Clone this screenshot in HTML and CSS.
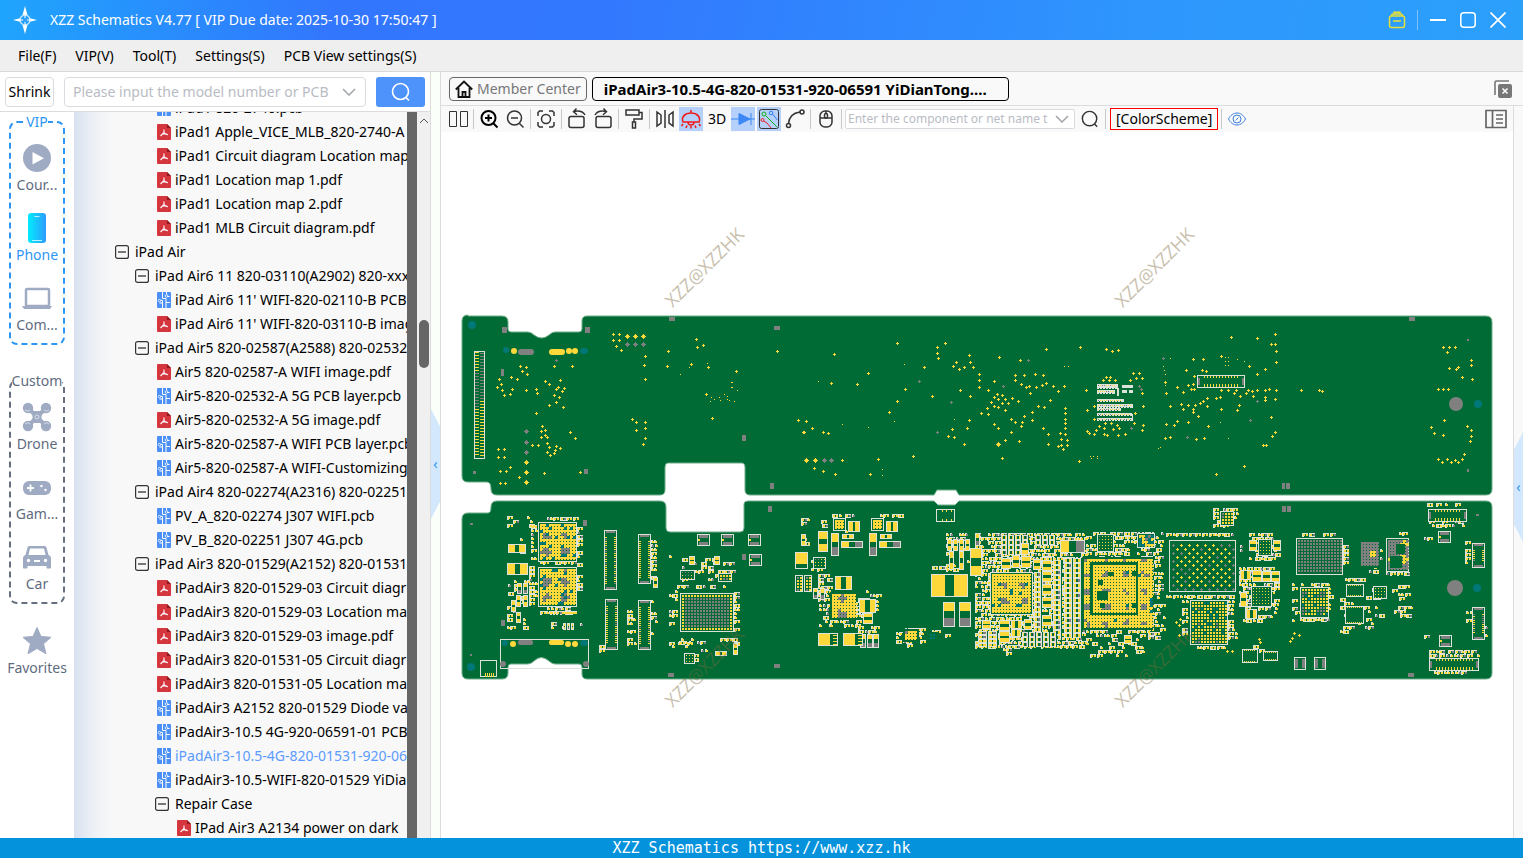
FILE: index.html
```html
<!DOCTYPE html>
<html lang="en">
<head>
    <meta charset="utf-8">
    <title>XZZ Schematics</title>
    <link rel="stylesheet" href="styles.css">
</head>
<body>
    <!-- shared icons -->
    <svg class="defs" width="0" height="0">
        <symbol id="i-pdf" viewBox="0 0 14 16">
            <path d="M1 0h9l4 4v11a1 1 0 0 1-1 1H1a1 1 0 0 1-1-1V1a1 1 0 0 1 1-1z" fill="#d5353d"/>
            <path d="M10 0l4 4h-4z" fill="#8d1a20"/>
            <path d="M7 5.500v3L3.500 12M7 8.500c1 1.500 2 2.300 4 2.300M4.500 10.600c2-.9 4-1.100 5.500-.6" fill="none" stroke="#fff" stroke-width="1.100"/>
        </symbol>
        <symbol id="i-pcb" viewBox="0 0 14 16">
            <rect width="14" height="16" rx="1" fill="#4c8ff7"/>
            <path d="M5.500 0v6.500H9M9.500 0v2.500M12.500 4.500h-2.500M9 6.500V16M3.500 8.500h2v2.500H2.500M5.500 11v5M9 10.500h4" fill="none" stroke="#fff" stroke-width="1"/>
            <circle cx="9.500" cy="4" r="1.300" fill="#4c8ff7" stroke="#fff" stroke-width=".8"/>
            <circle cx="2.500" cy="8.500" r="1.200" fill="#4c8ff7" stroke="#fff" stroke-width=".8"/>
        </symbol>
        <symbol id="i-minus" viewBox="0 0 14 14">
            <rect x=".6" y=".6" width="12.800" height="12.800" rx="2" fill="none" stroke="#333" stroke-width="1.200"/>
            <path d="M3 7h8" stroke="#222" stroke-width="1.200"/>
        </symbol>
        <symbol id="i-search" viewBox="0 0 20 20">
            <circle cx="9.500" cy="9.500" r="8" fill="none" stroke="currentColor" stroke-width="1.600"/>
            <path d="M15 15.500l3 3" stroke="currentColor" stroke-width="1.600"/>
        </symbol>
        <symbol id="i-chevron" viewBox="0 0 14 8">
            <path d="M1 1l6 6 6-6" fill="none" stroke="#a0a4aa" stroke-width="1.500"/>
        </symbol>
    </svg>

    <header class="titlebar">
        <svg class="logo" viewBox="0 0 24 28">
            <path d="M12 0l2.500 9h-5zM12 28l2.500-9h-5zM0 14l8-2v4zM24 14l-8-2v4z" fill="#fff"/>
            <circle cx="12" cy="14" r="5" fill="none" stroke="#bfe3ff" stroke-width="1.500"/>
            <path d="M12 8v12M6 14h12" stroke="#fff" stroke-width="1"/>
            <circle cx="12" cy="14" r="2" fill="#2e9bff"/>
        </svg>
        <h1>XZZ Schematics V4.77 [ VIP Due date: 2025-10-30 17:50:47 ]</h1>
        <div class="window-buttons">
            <button aria-label="Toolbox">
                <svg width="18" height="18" viewBox="0 0 18 18" fill="none" stroke="#e5e038" stroke-width="1.500"><rect x="1.500" y="5" width="15" height="11.500" rx="2"/><path d="M3.500 5c0-1.500 1-2 2-2h7c1 0 2 .5 2 2M6 3V1.200h6V3M5 10h8"/></svg>
            </button>
            <span class="divider"></span>
            <button aria-label="Minimize"><svg width="16" height="16" viewBox="0 0 16 16"><path d="M0 8h16" stroke="#fff" stroke-width="2"/></svg></button>
            <button aria-label="Maximize"><svg width="16" height="16" viewBox="0 0 16 16"><rect x=".8" y=".8" width="14.400" height="14.400" rx="3" fill="none" stroke="#fff" stroke-width="1.500"/></svg></button>
            <button aria-label="Close"><svg width="16" height="16" viewBox="0 0 16 16"><path d="M.5.5l15 15M15.500.5l-15 15" stroke="#fff" stroke-width="1.700"/></svg></button>
        </div>
    </header>

    <nav class="menubar">
        <button>File(F)</button>
        <button>VIP(V)</button>
        <button>Tool(T)</button>
        <button>Settings(S)</button>
        <button>PCB View settings(S)</button>
    </nav>

    <main class="workspace">
        <section class="library">
            <form class="search-row">
                <button type="button" class="shrink">Shrink</button>
                <div class="combo">
                    <input type="text" aria-label="Model number" placeholder="Please input the model number or PCB">
                    <svg width="14" height="8"><use href="#i-chevron"/></svg>
                </div>
                <button type="button" class="search-btn" aria-label="Search"><svg width="20" height="20"><use href="#i-search"/></svg></button>
            </form>

            <div class="library-body">
                <div class="categories">
                    <fieldset class="group vip">
                        <legend>VIP</legend>
                        <button class="category">
                            <svg viewBox="0 0 30 30"><circle cx="15" cy="15" r="14" fill="#9fabc2"/><path d="M10.500 9v12.500l11.500-6.200z" fill="#fff"/></svg>
                            <span>Cour...</span>
                        </button>
                        <button class="category current">
                            <svg viewBox="0 0 30 30"><defs><linearGradient id="phone"><stop offset="0" stop-color="#03ecfd"/><stop offset="1" stop-color="#2c9cfd"/></linearGradient></defs><rect x="6" y="0" width="18" height="30" rx="3" fill="url(#phone)"/><path d="M12.500 3.500h5M10 27.500h10" stroke="#bdf3ff" stroke-width="1.200"/></svg>
                            <span>Phone</span>
                        </button>
                        <button class="category">
                            <svg viewBox="0 0 30 30"><rect x="4" y="6" width="23" height="17" rx="1" fill="none" stroke="#9fabc2" stroke-width="2.500"/><path d="M0 23h30l-2 3H2z" fill="#9fabc2"/></svg>
                            <span>Com...</span>
                        </button>
                    </fieldset>
                    <fieldset class="group custom">
                        <legend>Custom</legend>
                        <button class="category">
                            <svg viewBox="0 0 30 30"><path d="M6 6l18 18M24 6L6 24" stroke="#9fabc2" stroke-width="4"/><g fill="#9fabc2"><circle cx="6" cy="6" r="5.200"/><circle cx="24" cy="6" r="5.200"/><circle cx="6" cy="24" r="5.200"/><circle cx="24" cy="24" r="5.200"/><rect x="10.500" y="9" width="9" height="12" rx="3"/></g><g fill="none" stroke="#e4e8f0" stroke-width=".8"><path d="M3 8a3.500 3.500 0 0 0 5 0M27 8a3.500 3.500 0 0 1-5 0M3 22a3.500 3.500 0 0 1 5 0M27 22a3.500 3.500 0 0 0-5 0"/><circle cx="15" cy="15" r="2"/></g></svg>
                            <span>Drone</span>
                        </button>
                        <button class="category">
                            <svg viewBox="0 0 30 30"><rect x="1" y="9" width="28" height="14" rx="6" fill="#9fabc2"/><path d="M5 16h7M8.500 12.500v7" stroke="#fff" stroke-width="1.800"/><circle cx="19.500" cy="14" r="1.200" fill="#fff"/><circle cx="23.500" cy="18" r="1.200" fill="#fff"/></svg>
                            <span>Gam...</span>
                        </button>
                        <button class="category">
                            <svg viewBox="0 0 30 30"><path d="M7.500 4h15c1 0 1.800.6 2 1.500L26.500 13c1.500.6 2.500 1.800 2.500 3.500v9c0 .6-.4 1-1 1h-2.500c-.6 0-1-.4-1-1V24H5.500v1.500c0 .6-.4 1-1 1H2c-.6 0-1-.4-1-1v-9c0-1.700 1-2.900 2.500-3.500l2-7.500c.2-.9 1-1.500 2-1.500zM8 6.500L6.500 13h17L22 6.500z" fill="#9fabc2" fill-rule="evenodd"/><circle cx="6.500" cy="18.500" r="1.700" fill="#fff"/><circle cx="23.500" cy="18.500" r="1.700" fill="#fff"/><path d="M12 19h6" stroke="#fff" stroke-width="2"/></svg>
                            <span>Car</span>
                        </button>
                    </fieldset>
                    <button class="category">
                        <svg viewBox="0 0 30 30"><path d="M15 1.500l4 9 10 .8-7.500 6.500 2.500 10-9-5.300-9 5.300 2.500-10L1 11.300l10-.8z" fill="#9fabc2" stroke="#9fabc2" stroke-linejoin="round"/></svg>
                        <span>Favorites</span>
                    </button>
                </div>

                <div class="tree">
                    <ul class="level-1">
                        <li>
                            <ul class="level-2"><li>
                            <ul class="files">
                                <li><svg class="file"><use href="#i-pcb"/></svg>iPad1 820-2740.pcb</li>
                                <li><svg class="file"><use href="#i-pdf"/></svg>iPad1 Apple_VICE_MLB_820-2740-A</li>
                                <li><svg class="file"><use href="#i-pdf"/></svg>iPad1 Circuit diagram Location map</li>
                                <li><svg class="file"><use href="#i-pdf"/></svg>iPad1 Location map 1.pdf</li>
                                <li><svg class="file"><use href="#i-pdf"/></svg>iPad1 Location map 2.pdf</li>
                                <li><svg class="file"><use href="#i-pdf"/></svg>iPad1 MLB Circuit diagram.pdf</li>
                            </ul>
                            </li></ul>
                        </li>
                        <li>
                            <button class="node"><svg class="toggle"><use href="#i-minus"/></svg>iPad Air</button>
                            <ul class="level-2">
                                <li>
                                    <button class="node"><svg class="toggle"><use href="#i-minus"/></svg>iPad Air6 11 820-03110(A2902) 820-xxx</button>
                                    <ul class="files">
                                        <li><svg class="file"><use href="#i-pcb"/></svg>iPad Air6 11' WIFI-820-02110-B PCB</li>
                                        <li><svg class="file"><use href="#i-pdf"/></svg>iPad Air6 11' WIFI-820-03110-B imag</li>
                                    </ul>
                                </li>
                                <li>
                                    <button class="node"><svg class="toggle"><use href="#i-minus"/></svg>iPad Air5 820-02587(A2588) 820-02532</button>
                                    <ul class="files">
                                        <li><svg class="file"><use href="#i-pdf"/></svg>Air5 820-02587-A WIFI image.pdf</li>
                                        <li><svg class="file"><use href="#i-pcb"/></svg>Air5-820-02532-A 5G PCB layer.pcb</li>
                                        <li><svg class="file"><use href="#i-pdf"/></svg>Air5-820-02532-A 5G image.pdf</li>
                                        <li><svg class="file"><use href="#i-pcb"/></svg>Air5-820-02587-A WIFI PCB layer.pcb</li>
                                        <li><svg class="file"><use href="#i-pcb"/></svg>Air5-820-02587-A WIFI-Customizing</li>
                                    </ul>
                                </li>
                                <li>
                                    <button class="node"><svg class="toggle"><use href="#i-minus"/></svg>iPad Air4 820-02274(A2316) 820-02251</button>
                                    <ul class="files">
                                        <li><svg class="file"><use href="#i-pcb"/></svg>PV_A_820-02274 J307 WIFI.pcb</li>
                                        <li><svg class="file"><use href="#i-pcb"/></svg>PV_B_820-02251 J307 4G.pcb</li>
                                    </ul>
                                </li>
                                <li>
                                    <button class="node"><svg class="toggle"><use href="#i-minus"/></svg>iPad Air3 820-01529(A2152) 820-01531</button>
                                    <ul class="files">
                                        <li><svg class="file"><use href="#i-pdf"/></svg>iPadAir3 820-01529-03 Circuit diagr</li>
                                        <li><svg class="file"><use href="#i-pdf"/></svg>iPadAir3 820-01529-03 Location ma</li>
                                        <li><svg class="file"><use href="#i-pdf"/></svg>iPadAir3 820-01529-03 image.pdf</li>
                                        <li><svg class="file"><use href="#i-pdf"/></svg>iPadAir3 820-01531-05 Circuit diagr</li>
                                        <li><svg class="file"><use href="#i-pdf"/></svg>iPadAir3 820-01531-05 Location ma</li>
                                        <li><svg class="file"><use href="#i-pcb"/></svg>iPadAir3 A2152 820-01529 Diode va</li>
                                        <li><svg class="file"><use href="#i-pcb"/></svg>iPadAir3-10.5 4G-920-06591-01 PCB</li>
                                        <li class="selected"><svg class="file"><use href="#i-pcb"/></svg>iPadAir3-10.5-4G-820-01531-920-06</li>
                                        <li><svg class="file"><use href="#i-pcb"/></svg>iPadAir3-10.5-WIFI-820-01529 YiDia</li>
                                    </ul>
                                    <ul class="level-3">
                                        <li>
                                            <button class="node"><svg class="toggle"><use href="#i-minus"/></svg>Repair Case</button>
                                            <ul class="files">
                                                <li><svg class="file"><use href="#i-pdf"/></svg>IPad Air3 A2134 power on dark</li>
                                            </ul>
                                        </li>
                                    </ul>
                                </li>
                            </ul>
                        </li>
                    </ul>
                </div>
                <div class="tree-edge"></div>
                <div class="scrollbar">
                    <svg width="10" height="6" viewBox="0 0 10 6"><path d="M1 5l4-4 4 4" fill="none" stroke="#555"/></svg>
                    <div class="thumb"></div>
                </div>
            </div>
        </section>

        <div class="gutter left">
            <button class="handle" aria-label="Collapse library">&lsaquo;</button>
        </div>

        <section class="viewer">
            <div class="tabs">
                <button class="tab">
                    <svg width="18" height="18" viewBox="0 0 18 18" fill="none" stroke="#111" stroke-width="1.800"><path d="M.8 9.500L9 1.500l8.200 8M3.500 8v9h11V8M7.500 17v-5h3v5"/></svg>
                    Member Center
                </button>
                <button class="tab active">iPadAir3-10.5-4G-820-01531-920-06591 YiDianTong....</button>
                <button class="close-all" aria-label="Close all tabs">
                    <svg width="18" height="18" viewBox="0 0 18 18"><path d="M1 15V2.500C1 1.500 1.500 1 2.500 1H15" fill="none" stroke="#777" stroke-width="1.600"/><rect x="4" y="4" width="14" height="14" rx="2" fill="#777"/><path d="M8.500 8.500l5 5M13.500 8.500l-5 5" stroke="#fff" stroke-width="1.500"/></svg>
                </button>
            </div>

            <div class="viewer-body">
                <div class="board-pane">
                    <div class="toolbar">
                        <button class="tool" aria-label="Split view"><svg viewBox="0 0 24 24" class="thin"><path d="M3.500 4.500h7v15h-7zM14.500 4.500h7v15h-7z"/></svg></button>
                        <span class="sep"></span>
                        <button class="tool" aria-label="Zoom in"><svg viewBox="0 0 24 24" class="bold"><circle cx="11.500" cy="11" r="7"/><path d="M16.500 16.500l4 4M8 11h7M11.500 7.500v7"/></svg></button>
                        <button class="tool" aria-label="Zoom out"><svg viewBox="0 0 24 24"><circle cx="11.500" cy="11" r="7"/><path d="M16.500 16.500l4 4M8 11h7"/></svg></button>
                        <span class="sep"></span>
                        <button class="tool" aria-label="Fit"><svg viewBox="0 0 24 24"><circle cx="12" cy="12" r="4.500"/><path d="M4 9V5.500L5.500 4H9M15 4h3.500L20 5.500V9M20 15v3.500L18.500 20H15M9 20H5.500L4 18.500V15"/></svg></button>
                        <span class="sep"></span>
                        <button class="tool" aria-label="Rotate left"><svg viewBox="0 0 24 24"><rect x="4" y="9.500" width="15" height="11" rx="2"/><path d="M9 4.500c5-1 9 0 11 3.500M11.500 1.500L8.500 4.700l3.500 3"/></svg></button>
                        <button class="tool" aria-label="Rotate right"><svg viewBox="0 0 24 24"><rect x="5" y="9.500" width="15" height="11" rx="2"/><path d="M15 4.500c-5-1-9 0-11 3.500M12.500 1.500l3 3.200-3.500 3"/></svg></button>
                        <span class="sep"></span>
                        <button class="tool" aria-label="Paint"><svg viewBox="0 0 24 24"><rect x="4" y="3" width="13" height="5"/><path d="M17 5.500h3V12h-8v3M10.500 15h3v6h-3z"/></svg></button>
                        <span class="sep"></span>
                        <button class="tool" aria-label="Mirror"><svg viewBox="0 0 24 24"><path d="M4 5l4 3v8l-4 3zM20 5l-4 3v8l4 3zM12 3v18"/></svg></button>
                        <button class="tool on" aria-label="Light"><svg viewBox="0 0 24 24" class="red"><path d="M4 15c-2-5 2-9 8-9s10 4 8 9zM12 6V3M9 15a3 3 0 0 0 6 0M4 17l-1.500 2M20 17l1.500 2M12 19v2.500M8 18.500L7 21M16 18.500l1 2.500"/></svg></button>
                        <button class="tool text">3D</button>
                        <button class="tool on" aria-label="Diode"><svg viewBox="0 0 24 24" class="blue"><path d="M0 12h24M20 6v12"/><path d="M8 6.500v11l11-5.500z" fill="#3a87f5"/></svg></button>
                        <button class="tool on" aria-label="Nets"><svg viewBox="0 0 24 24" class="thin"><rect x="2.500" y="2.500" width="19" height="19" rx="2"/><path d="M8.500 8.500L20 20" stroke="#13b313"/><circle cx="7" cy="7" r="2" stroke="#13b313"/><circle cx="5.500" cy="13" r="1.500" stroke="#e22"/><path d="M6.500 14l3.500 2 4 5" stroke="#e22"/><circle cx="14" cy="6" r="1.800" stroke="#2f7fee"/><path d="M15.500 7l5 6" stroke="#2f7fee"/></svg></button>
                        <button class="tool" aria-label="Curve"><svg viewBox="0 0 24 24"><circle cx="5.500" cy="18.500" r="2"/><circle cx="19" cy="5" r="2"/><path d="M5.500 16.500C6 10 10 6 17 5"/></svg></button>
                        <span class="sep"></span>
                        <button class="tool" aria-label="Mouse"><svg viewBox="0 0 24 24"><rect x="6" y="4" width="12" height="16" rx="5"/><path d="M6 11h12M12 4v3"/><rect x="10.500" y="6.500" width="3" height="4.500" rx="1.500"/></svg></button>
                        <span class="sep"></span>
                        <div class="combo small">
                            <input type="text" aria-label="Component or net name" placeholder="Enter the component or net name t">
                            <svg width="14" height="8"><use href="#i-chevron"/></svg>
                        </div>
                        <button class="tool" aria-label="Find"><svg class="find"><use href="#i-search"/></svg></button>
                        <span class="sep"></span>
                        <button class="scheme">[ColorScheme]</button>
                        <span class="sep"></span>
                        <button class="tool" aria-label="Show"><svg viewBox="0 0 24 24" class="eye"><path d="M3.500 12c4-8 13-8 17 0-4 8-13 8-17 0z"/><circle cx="12" cy="12" r="4"/><path d="M10.500 13.500l3-3"/></svg></button>
                        <button class="panel-toggle" aria-label="Side panel"><svg width="22" height="20" viewBox="0 0 22 20" fill="none" stroke="#666" stroke-width="1.700"><path d="M1 1.500h20v17H1zM7.500 1.500v17M11 6h7M11 10h7M11 14h7"/></svg></button>
                    </div>
                    <svg id="board" viewBox="441 132 1072 706"></svg>
                </div>
                <div class="gutter right">
                    <button class="handle" aria-label="Expand panel">&lsaquo;</button>
                </div>
            </div>
        </section>
    </main>

    <footer>XZZ Schematics https://www.xzz.hk</footer>
    <script src="board.js"></script>
</body>
</html>
```
FILE: styles.css
```css
* {
    box-sizing: border-box;
}

body {
    margin: 0;
    height: 100vh;
    display: flex;
    flex-direction: column;
    overflow: hidden;
    font-family: "Noto Sans", "Open Sans", sans-serif;
    font-size: 14px;
    line-height: 20px;
    color: #000;
    background: #fff;
}

button, input {
    font: inherit;
    color: inherit;
}

button {
    padding: 0;
    border: 0;
    background: none;
    white-space: nowrap;
}

svg {
    display: block;
    flex: none;
}

.defs {
    position: absolute;
}

/* title bar */
.titlebar {
    height: 40px;
    flex: none;
    display: flex;
    align-items: center;
    padding: 0 17px 0 13px;
    color: #fff;
    background: linear-gradient(100deg, #1fa5fd 0%, #3276fd 22%, #3278fe 40%, #2e96fd 75%, #2ba0fb 100%);
}

.logo {
    width: 24px;
    height: 28px;
    margin-right: 13px;
}

.titlebar h1 {
    margin: 0;
    font-size: 14px;
    font-weight: normal;
}

.window-buttons {
    display: flex;
    align-items: center;
    gap: 14px;
    margin-left: auto;
}

.divider {
    width: 1px;
    height: 20px;
    margin: 0 -2px 0 -3px;
    background: #7dc0fd;
}

.menubar {
    height: 32px;
    flex: none;
    display: flex;
    align-items: center;
    gap: 19px;
    padding: 0 18px;
    background: #efefef;
    border-bottom: 1px solid #d9d9d9;
}

.workspace {
    flex: 1;
    min-height: 0;
    display: flex;
}

/* left side */
.library {
    width: 431px;
    flex: none;
    display: flex;
    flex-direction: column;
    border-right: 1px solid #dcdcdc;
}

.search-row {
    height: 40px;
    flex: none;
    display: flex;
    align-items: center;
    gap: 10px;
    padding: 0 5px;
    border-bottom: 1px solid #dcdcdc;
}

.shrink, .combo {
    height: 30px;
    border: 1px solid #d9dbe0;
    border-radius: 4px;
    background: #fff;
}

.shrink {
    width: 49px;
}

.combo {
    flex: 1;
    min-width: 0;
    display: flex;
    align-items: center;
    padding: 0 9px 0 8px;
}

.combo input {
    flex: 1;
    min-width: 0;
    padding: 0;
    border: 0;
    outline: 0;
    background: none;
}

.combo svg {
    margin-left: 6px;
}

.combo input::placeholder {
    color: #b9bcc4;
}

.search-btn {
    width: 49px;
    height: 30px;
    display: flex;
    align-items: center;
    justify-content: center;
    border-radius: 3px;
    color: #fff;
    background: #4e92fb;
}

.library-body {
    flex: 1;
    min-height: 0;
    display: flex;
}

.categories {
    width: 74px;
    flex: none;
    padding: 0 9px;
    color: #5f6b80;
}

.group {
    min-width: 0;
    margin: 0 0 26px;
    padding: 11px 0 8px;
    display: flex;
    flex-direction: column;
    gap: 18px;
    border: 2px dashed #666f80;
    border-radius: 8px;
}

.group.custom {
    margin-bottom: 22px;
}

.group legend {
    height: 20px;
    margin: 0 auto;
    padding: 0;
}

.vip {
    border-color: #2d96f3;
}

.vip legend, .category.current {
    color: #2d96f3;
}

.category {
    width: 100%;
    display: flex;
    flex-direction: column;
    align-items: center;
    gap: 2px;
}

.category svg {
    width: 30px;
    height: 30px;
}

/* file tree */
.tree {
    flex: 1;
    min-width: 0;
    overflow: hidden;
    background: linear-gradient(90deg, #d8e1f1 0, #eceff5 18px, #f8f8f8 38px);
}

.tree ul {
    margin: 0;
    padding: 0;
    list-style: none;
}

.tree .level-1 {
    margin-top: -16px;
    padding-left: 41px;
}

.tree .level-2, .tree .level-3 {
    padding-left: 20px;
}

.node, .files li {
    height: 24px;
    display: flex;
    align-items: center;
    white-space: nowrap;
}

.tree .files {
    padding-left: 22px;
}

.toggle {
    width: 14px;
    height: 14px;
    margin-right: 6px;
}

.file {
    width: 14px;
    height: 16px;
    margin-right: 4px;
}

.selected {
    color: #5c9bff;
}

.tree-edge {
    width: 10px;
    background: #666;
}

.scrollbar {
    width: 13px;
    padding: 6px 2px;
    background: #f0f0f0;
}

.thumb {
    width: 10px;
    height: 48px;
    margin-top: 196px;
    border-radius: 5px;
    background: #666;
}

/* collapsible gutters */
.gutter {
    width: 10px;
    flex: none;
    display: flex;
    align-items: center;
}

.gutter.left {
    padding-top: 18px;
    background: #fafffa;
    border-right: 1px solid #dcdcdc;
}

.gutter.right {
    padding-top: 30px;
    background: #f9f9f9;
    border-left: 1px solid #dcdcdc;
}

.handle {
    width: 9px;
    height: 110px;
    color: #2d96f3;
    background: #d3e8fd;
    clip-path: polygon(0 0, 100% 16%, 100% 84%, 0 100%);
}

.right .handle {
    clip-path: polygon(0 16%, 100% 0, 100% 100%, 0 84%);
}

/* right side */
.viewer {
    flex: 1;
    min-width: 0;
    display: flex;
    flex-direction: column;
}

.tabs {
    height: 34px;
    flex: none;
    display: flex;
    align-items: center;
    gap: 5px;
    padding: 0 11px 0 8px;
    background: #f9f9f9;
    border-bottom: 1px solid #dcdcdc;
}

.tab {
    height: 24px;
    display: flex;
    align-items: center;
    gap: 4px;
    padding: 0 5px;
    border: 1px solid #666;
    border-radius: 4px;
    color: #777;
}

.tab.active {
    min-width: 417px;
    padding: 0 11px;
    border-color: #000;
    color: #000;
    font-size: 15px;
    font-weight: bold;
}

.close-all {
    margin-left: auto;
}

.viewer-body {
    flex: 1;
    min-height: 0;
    display: flex;
}

.board-pane {
    flex: 1;
    min-width: 0;
    display: flex;
    flex-direction: column;
}

.toolbar {
    height: 26px;
    flex: none;
    display: flex;
    align-items: center;
    gap: 2px;
    padding: 0 6px 0 5px;
    background: #f9f9f9;
}

.tool {
    width: 24px;
    height: 24px;
    flex: none;
    display: flex;
    align-items: center;
    justify-content: center;
}

.tool svg {
    width: 24px;
    height: 24px;
    fill: none;
    stroke: #333;
    stroke-width: 1.5;
}

.tool svg.thin {
    stroke-width: 1;
}

.tool svg.bold {
    stroke: #000;
    stroke-width: 2;
}

.tool svg.red {
    stroke: #f01818;
}

.tool svg.blue {
    stroke: #3a87f5;
    stroke-width: 1;
}

.tool svg.eye {
    stroke: #3c7fe0;
    stroke-width: 1;
}

.tool svg.find {
    width: 18px;
    height: 18px;
    color: #333;
}

.tool.on {
    background: #b5d0fa;
}

.sep {
    width: 1px;
    height: 20px;
    margin: 0 1px;
    background: #c8c8c8;
}

.combo.small {
    flex: 0 1 230px;
    height: 20px;
    margin-right: 1px;
    padding: 0 5px 0 2px;
    border-radius: 2px;
    font-size: 12px;
}

.combo.small svg {
    margin-left: 2px;
}

.scheme {
    height: 22px;
    margin-left: 1px;
    padding: 0 5px;
    border: 1px solid #f00;
}

.panel-toggle {
    margin-left: auto;
}

#board {
    width: 100%;
    flex: 1;
    min-height: 0;
}

.watermark {
    font: 18px "Open Sans", sans-serif;
    text-anchor: middle;
    fill: #7d6c3c;
    opacity: .42;
}

footer {
    height: 20px;
    flex: none;
    color: #fff;
    background: #0492dc;
    font: 15px/20px "DejaVu Sans Mono", monospace;
    text-align: center;
}
```
FILE: board.js
```js
const GREEN = "#006b35";
const YELLOW = "#ffd83b";
const GREY = "#808080";
const TEAL = "#007878";
const WHITE = "#dde2da";

let svg = "";
let layer = {};

// small repeatable random generator so the board always looks the same
let seed = 7;
function rnd() {
    seed = (seed * 16807) % 2147483647;
    return seed / 2147483647;
}

function box(color, x, y, w, h) {
    layer[color] = (layer[color] || "") + `M${x} ${y}h${w}v${h}h${-w}z`;
}

function flush() {
    for (const color in layer) {
        svg += `<path fill="${color}" d="${layer[color]}" shape-rendering="crispEdges"/>`;
    }
    layer = {};
}

function frame(x, y, w, h) {
    box(WHITE, x, y, w, 1);
    box(WHITE, x, y + h - 1, w, 1);
    box(WHITE, x, y + 1, 1, h - 2);
    box(WHITE, x + w - 1, y + 1, 1, h - 2);
}

function clear(x, y, w, h) {
    box(GREEN, x, y, w, h);
    flush();
}

function plus(color, x, y, r) {
    box(color, x - r, y, r * 2 + 1, 1);
    box(color, x, y - r, 1, r * 2 + 1);
    if (r > 1) box(color, x - 1, y - 1, 3, 3);
}

function points(color, r, text) {
    text.split(" ").forEach(p => {
        const [x, y] = p.split(",").map(Number);
        plus(color, x, y, r);
    });
}

// one capacitor or resistor: two pads in a white frame
function part(x, y, w, h, second) {
    frame(x, y, w, h);
    const across = w > h;
    const n = Math.max(1, Math.round(((across ? w : h) - 2) * .36));
    if (across) {
        box(YELLOW, x + 1, y + 1, n, h - 2);
        box(second || YELLOW, x + w - 1 - n, y + 1, n, h - 2);
    } else {
        box(YELLOW, x + 1, y + 1, w - 2, n);
        box(second || YELLOW, x + 1, y + h - 1 - n, w - 2, n);
    }
}

function pads(x, y, w, h, second) {
    clear(x, y, w, h);
    part(x, y, w, h, second);
    flush();
}

// ordered block of equal parts
function bank(x, y, cols, rows, w, h) {
    clear(x, y, cols * (w + 1), rows * h);
    for (let r = 0; r < rows; r++) {
        for (let c = 0; c < cols; c++) {
            part(x + c * (w + 1), y + r * h, w, h, rnd() < .3 ? GREY : YELLOW);
        }
    }
    flush();
}

// area of small parts, fill is the share of used cells
function parts(x, y, w, h, fill) {
    for (let j = y; j + 4 <= y + h; j += 4) {
        let i = x;
        while (i + 3 <= x + w) {
            const len = rnd() > .4 ? 6 : 3;
            if (rnd() < fill && i + len <= x + w) {
                const alt = rnd() > .8 ? GREY : YELLOW;
                if (len === 6) {
                    box(WHITE, i, j, 6, 1);
                    box(WHITE, i, j + 3, rnd() > .7 ? 6 : 2, 1);
                    box(WHITE, i, j, 1, 4);
                    box(YELLOW, i + 1, j + 1, 2, 2);
                    box(alt, i + 4, j + 1, 2, 2);
                } else {
                    box(WHITE, i, j, 2, 1);
                    box(WHITE, i, j, 1, 3);
                    box(alt, i + 1, j + 1, 2, 2);
                }
            }
            i += len + (rnd() > .6 ? 1 : 0);
        }
    }
}

// ball grid chip
function bga(x, y, w, h, opt) {
    const o = Object.assign({ main: YELLOW, alt: GREY, mix: .1, step: 3, size: 2 }, opt);
    clear(x, y, w, h);
    if (!o.bare) frame(x, y, w, h);
    for (let j = y + 2; j + o.size < y + h; j += o.step) {
        for (let i = x + 2; i + o.size < x + w; i += o.step) {
            const blob = Math.sin(i * .33 + x) + Math.sin(j * .39 + y) + rnd() * .9;
            let color = blob > 2.2 - o.mix * 5 ? o.alt : o.main;
            if (o.teal && rnd() < o.teal) color = TEAL;
            if (o.border && (i < x + 5 || j < y + 5 || i > x + w - 7 || j > y + h - 7)) color = o.border;
            if (o.solid) {
                box(color, i, j, 2, 3);
                box(color, i, j, 3, 2);
            } else {
                box(color, i, j, o.size, o.size);
            }
        }
    }
    flush();
}

function connector(x, y, w, h) {
    clear(x, y, w, h);
    frame(x, y, w, h);
    if (h > w) {
        for (let j = y + 7; j < y + h - 6; j += 2) {
            box(rnd() > .15 ? YELLOW : GREY, x + 1, j, 2, 1);
            box(rnd() > .15 ? YELLOW : GREY, x + w - 3, j, 2, 1);
        }
        box(GREY, x + 2, y + 1, w - 4, 2);
        box(GREY, x + 2, y + h - 3, w - 4, 2);
    } else {
        for (let i = x + 7; i < x + w - 6; i += 3) {
            box(YELLOW, i, y + 1, 1, 2);
            box(YELLOW, i, y + h - 4, 1, 3);
        }
        box(GREY, x + 1, y + 3, 2, h - 6);
        box(GREY, x + w - 3, y + 3, 2, h - 6);
    }
    flush();
}

function greyCap(x, y) {
    frame(x, y, 13, 12);
    box(GREY, x + 2, y + 1, 9, 3);
    box(GREY, x + 2, y + 8, 9, 3);
    box(YELLOW, x + 1, y + 5, 2, 2);
}

function circle(color, x, y, rx, ry) {
    svg += `<ellipse cx="${x}" cy="${y}" rx="${rx}" ry="${ry || rx}" fill="${color}"/>`;
}

/* board outlines */
const edge = `fill="${GREEN}" stroke="#6fae8b" stroke-width="1"`;
svg += `<path ${edge} d="M468 316h34q6 0 6 6v7q0 3 3 3h17q3 0 6 3q8 6 15 0q3 -3 6 -3h24q3 0 3 -3v-8q0 -5 5 -5h899q6 0 6 6v167q0 6 -6 6h-527l-3 -5h-19l-3 5h-184q-5 0 -5 -5v-23q0 -4 -3 -4h-74q-3 0 -3 4v23q0 5 -5 5h-163q-6 0 -6 -6q0 -7 -4 -7h-19q-6 0 -6 -6v-155q0 -6 6 -6z"/>`;
svg += `<path ${edge} d="M497 501h163q6 0 6 6v21q0 4 4 4h70q4 0 4 -4v-24q0 -3 4 -3h186l4 4h17l4 -4h527q6 0 6 6v166q0 6 -6 6h-899q-5 0 -5 -5v-7q0 -3 -3 -3h-24q-3 0 -6 -3q-8 -7 -15 0q-3 3 -6 3h-17q-3 0 -3 3v6q0 6 -6 6h-34q-6 0 -6 -6v-154q0 -6 6 -6h20q3 0 3 -6t6 -6z"/>`;

/* upper board: vias */
points(YELLOW, 1, "613,334 619,334 613,340 619,340 616,346 621,350 645,356 644,365 645,379 668,351 667,366 696,339 703,345 697,347 691,364 708,367 736,371 706,394 712,418 777,351 798,420 803,432 554,366 572,366 520,366 526,367 522,371 527,374 511,377 517,379 499,379 501,384 497,387 502,390 512,389 504,395 510,394 526,390 536,389 537,393 545,381 549,384 560,380 558,387 556,389 564,388 562,391 554,395 559,397 556,402 549,405 563,407 536,413 542,426 541,431 545,430 545,435 541,437 547,437 570,432 575,438 532,445 538,445 547,443 549,447 556,446 560,448 555,450 547,452 554,453 550,455 498,449 504,449 498,457 504,457 510,467 500,471 506,471 519,477 500,483 505,483 544,473 580,472 632,419 636,422 636,430 645,422 645,428 645,438 643,444");
points(YELLOW, 1, "897,343 945,343 937,347 937,353 938,358 834,354 969,355 956,362 970,362 924,367 953,366 959,369 964,367 973,367 868,373 831,383 857,384 905,389 897,401 889,412 932,396 960,390 979,374 979,380 979,387 970,396 999,357 1020,360 1046,349 1080,347 994,381 1015,375 1024,375 1035,374 1043,375 1015,380 1021,384 1026,387 1029,386 1046,383 1042,385 1036,387 1053,386 1064,386 1058,391 1030,393 1050,400 988,390 997,394 1002,395 994,397 998,399 1005,399 1012,398 991,402 1002,403 1008,403 1018,401 994,406 987,408 998,407 1005,410 981,413 988,414 1038,406 1044,407 1032,412 1024,416 1011,419 969,420 1015,422 1022,422 994,424 1032,420 1021,426 998,428 967,428 952,429 948,436 954,437 964,444 1011,432 1043,428 1048,434 1005,440 1019,441 1002,458 1048,444 1065,408 1065,413 1065,419 1065,423 1065,428 1065,434 1060,433 1061,439 1067,440 1058,446 1061,445 1067,445 1063,449 806,421 812,428 804,432 823,432 828,433 842,460 814,468 823,471 835,474 870,474 878,459 913,456 1079,461");
points(YELLOW, 1, "1106,349 1112,351 1118,350 1133,373 1139,373 1136,378 1142,378 1130,380 1106,377 1110,377 1103,380 1109,380 1115,380 1086,390 1142,393 1094,406 1087,410 1094,419 1087,431 1099,426 1105,423 1111,423 1117,425 1104,428 1113,429 1119,428 1096,430 1089,433 1094,434 1104,434 1107,435 1118,435 1125,434 1143,425 1142,430 1134,423 1143,406 1135,413 1231,337 1257,338 1275,334 1271,344 1275,344 1276,351 1276,362 1193,359 1203,359 1221,356 1249,366 1265,369 1257,374 1186,370 1202,370 1206,371 1194,376 1165,382 1166,393 1177,387 1193,384 1188,385 1191,389 1194,389 1183,392 1221,390 1228,390 1236,390 1248,390 1252,391 1257,390 1269,389 1265,390 1276,390 1234,393 1246,393 1240,396 1253,396 1265,397 1265,400 1275,399 1220,397 1216,398 1207,398 1203,401 1200,403 1181,404 1188,405 1195,405 1170,406 1183,409 1193,409 1207,406 1193,412 1198,416 1221,409 1239,405 1237,410 1177,421 1166,424 1174,425 1188,422 1208,426 1271,417 1275,432 1272,436 1165,438 1170,437 1196,439 1204,438 1263,445 1266,445 1244,466 1216,474 1301,390 1319,390 1322,391");
points(YELLOW, 1, "1443,347 1449,347 1455,347 1447,352 1471,360 1471,365 1449,368 1456,369 1458,367 1462,377 1472,379 1438,389 1443,389 1448,389 1444,420 1431,427 1434,433 1443,435 1467,426 1471,430 1471,436 1470,441 1464,454 1438,459 1442,462 1447,459 1451,462 1455,460 1458,462 1462,459");
points(GREY, 1, "556,360 1028,360 919,381 1003,386 951,402 937,432 1163,358 1139,386 1141,389 1131,428 1257,401 1250,420 1187,437");
points(YELLOW, 2, "627,336 635,336 643,336 526,462 526,472 526,482 806,460 815,460 998,444");
points(GREY, 2, "627,344 635,344 643,344 526,431 526,442 526,452 824,460 831,460");

// single pixel test points
"680,374 689,367 707,363 731,382 731,387 732,382 732,387 737,390 711,397 710,401 714,399 719,397 720,400 724,394 727,396 727,399 729,400 734,401 818,381 904,364 842,424 868,427 894,421 882,469 882,475 954,419 1064,366 1068,366 1225,357 1225,361 1225,365 1228,357 1228,361 1228,365 1163,366 1164,370 1165,374 1165,385 1170,358 1237,359 1244,361 1220,422 1228,438 1160,447 1158,448 1090,456 1093,456 1097,456 1091,458 1097,458".split(" ").forEach(p => {
    const [x, y] = p.split(",").map(Number);
    box(YELLOW, x, y, 1, 1);
});

// grey mounting marks on both boards
[[502,327,5,6],[585,327,5,6],[669,317,6,4],[774,326,6,4],[501,369,3,7],[742,435,4,6],[770,483,4,6],[584,469,4,5],[473,471,3,3],[1409,317,6,4],[1282,483,3,6],[1286,483,4,6],[1467,339,2,2],[1467,469,2,3],[768,506,4,6],[583,520,4,6],[742,554,4,6],[501,620,4,6],[470,523,3,2],[470,654,2,2],[668,673,6,4],[774,664,6,4],[1282,506,4,6],[1287,506,4,6],[1476,514,3,2],[1408,673,6,4]].forEach(m => box(GREY, ...m));
flush();

circle(TEAL, 472, 325, 4);
circle(TEAL, 506, 350, 3);
circle(YELLOW, 514, 351, 3);
svg += `<rect x="518" y="349" width="16" height="6" rx="3" fill="${GREY}"/><rect x="549" y="349" width="16" height="6" rx="3" fill="${YELLOW}"/>`;
circle(YELLOW, 569, 351, 3);
circle(YELLOW, 575, 351, 3);
circle(TEAL, 584, 351, 4, 3);
circle(GREY, 1456, 404, 7);
circle(TEAL, 1478, 404, 4);

// edge connector on the left
frame(474, 351, 11, 108);
for (let j = 352; j < 457; j += 3) {
    const color = j > 372 && j < 408 ? GREY : YELLOW;
    box(color, 475, j, 4, 1);
    box(j < 400 ? GREY : YELLOW, 480, j + 1, 4, 1);
}
// stacked part rows in the middle
[[384,21,5],[390,18,4],[399,27,3],[404,36,4],[408,24,3],[413,35,3],[418,36,3]].forEach(([y, w, h]) => {
    box(WHITE, 1097, y, w, h);
    for (let i = 1098; i < 1095 + w; i += 2) box(rnd() > .4 ? YELLOW : GREY, i, y + 1, 1, 1);
    for (let i = 1099; i < 1095 + w; i += 3) box(GREEN, i, y + h - 1, 1, 1);
});
box(WHITE, 1117, 388, 2, 8);
box(WHITE, 1122, 385, 11, 3);
box(WHITE, 1122, 390, 5, 3);
box(WHITE, 1129, 390, 4, 3);
box(WHITE, 1132, 414, 1, 7);
flush();
connector(1197, 375, 48, 13);

/* lower board: small parts */
[[507,516,30,12,.5],[547,517,36,6,.8],[531,525,8,38,.8],[577,523,6,44,.6],[508,535,10,8,.5],[520,538,8,16,.4],[540,561,38,6,.9],[529,566,9,42,.9],[577,575,6,16,.8],[540,607,36,8,.9],[550,611,28,6,.9],[508,580,10,28,.4],[514,580,16,24,.7],[507,606,12,26,.6],[523,618,8,12,.7],[551,622,14,8,.6],[580,623,4,6,.8],[599,645,8,10,.8],[651,540,8,46,.8],[627,610,11,36,.8],[651,600,8,42,.8],[669,555,8,4,.8],[682,558,60,16,.3],[672,570,68,12,.35],[674,585,60,7,.6],[669,590,9,52,.45],[734,570,6,22,.3],[734,592,6,40,.7],[669,638,72,8,.4],[672,641,20,8,.7],[697,641,14,14,.6],[686,650,18,14,.5],
[801,518,11,28,.6],[818,520,10,10,.5],[832,514,34,6,.8],[870,514,34,6,.8],[845,530,16,5,.6],[883,530,16,5,.6],[811,560,20,14,.4],[818,574,16,30,.8],[819,600,14,30,.7],[830,620,34,10,.7],[855,598,16,22,.7],[866,590,16,10,.8],[876,600,8,12,.8],[858,626,24,14,.6],[896,628,30,20,.7],[925,630,30,10,.5],
[975,533,112,116,.9],[946,533,24,8,.9],[946,540,24,34,.4],[932,566,22,4,.6],[1000,648,20,8,.6],[1086,532,78,28,.75],[1086,626,64,8,.85],[1086,634,60,24,.38],[1148,556,18,84,.75],[1166,595,70,5,.95],[1166,533,70,4,.9],[1182,600,8,42,.8],[1228,600,10,42,.8],[1190,646,40,4,.9],
[1213,508,28,22,.7],[1240,533,4,40,.7],[1249,533,32,30,.6],[1239,567,42,58,.7],[1302,533,36,4,.7],[1343,545,8,32,.5],[1362,566,20,8,.5],[1380,545,5,26,.7],[1392,532,16,6,.8],[1409,545,4,20,.7],[1386,572,26,4,.8],[1292,583,38,5,.8],[1292,587,9,38,.5],[1328,587,6,24,.7],[1300,618,32,6,.6],[1345,578,22,6,.8],[1340,598,34,36,.4],[1366,588,20,14,.3],[1392,585,20,16,.5],[1375,606,14,14,.6],[1394,606,20,14,.6],[1427,503,38,7,.75],[1426,520,40,8,.7],[1465,541,8,28,.75],[1466,607,8,20,.7],[1485,622,4,16,.7],[1424,537,10,5,.8],[1424,635,10,5,.8],[1429,650,52,9,.75],[1434,671,36,4,.9],[1253,645,14,8,.7]].forEach(p => parts(...p));
flush();

/* chips */
bga(538, 522, 39, 40, { teal: .14, mix: .14, solid: true });
bga(538, 567, 39, 40, { teal: .14, mix: .14, solid: true });
pads(508, 544, 18, 9);
pads(507, 563, 21, 12);
pads(517, 583, 5, 11, GREY);
pads(523, 583, 5, 11, GREY);
pads(516, 595, 5, 12);
pads(523, 595, 5, 12);
pads(511, 600, 5, 12);
pads(516, 612, 5, 11);
bank(563, 623, 3, 1, 3, 7);
connector(604, 530, 13, 60);
connector(638, 534, 13, 50);
connector(605, 599, 13, 51);
connector(638, 600, 13, 50);
pads(653, 577, 5, 11);
greyCap(697, 534);
greyCap(721, 534);
greyCap(748, 534);
greyCap(749, 554);
bga(680, 570, 15, 10, { mix: .2, size: 1 });
bga(718, 573, 14, 9, { mix: .2 });
pads(689, 556, 6, 9);
pads(714, 556, 6, 9);
bga(680, 593, 54, 39, { main: GREY, border: YELLOW });
pads(715, 651, 12, 5);
pads(733, 643, 5, 12);
bga(684, 653, 11, 11, { size: 1 });

frame(500, 639, 89, 30);
frame(480, 660, 17, 17);
for (let i = 485; i < 495; i += 2) box(YELLOW, i, 673, 1, 4);
flush();
circle(TEAL, 471, 667, 4);
circle(TEAL, 505, 643, 3);
circle(YELLOW, 513, 644, 3);
svg += `<rect x="518" y="640" width="15" height="5" rx="2" fill="${GREY}"/><rect x="549" y="640" width="15" height="5" rx="2" fill="${YELLOW}"/>`;
circle(YELLOW, 568, 644, 3);
circle(YELLOW, 575, 644, 3);
circle(TEAL, 584, 643, 4, 3);
circle(GREY, 503, 664, 3);
circle(GREY, 586, 664, 3);

[0, 38].forEach(d => {
    bga(833 + d, 518, 13, 13, { solid: true });
    pads(848 + d, 521, 12, 11);
    pads(831 + d, 533, 8, 23, GREY);
    pads(842 + d, 534, 12, 5);
    pads(841 + d, 541, 22, 7, GREY);
});
pads(818, 531, 10, 21);
pads(801, 534, 5, 12);
frame(795, 552, 13, 17);
box(YELLOW, 796, 553, 11, 11);
bga(813, 557, 13, 12, { size: 1 });
bga(795, 575, 8, 17);
bga(804, 575, 8, 17);
pads(835, 576, 17, 14);
pads(813, 588, 5, 11, GREY);
pads(820, 588, 5, 12, GREY);
bga(830, 592, 26, 28, { solid: true, mix: .14, bare: true });
pads(859, 599, 17, 14);
pads(863, 613, 10, 11);
pads(860, 634, 6, 14, GREY);
pads(867, 634, 6, 14, GREY);
pads(873, 634, 6, 14, GREY);
[818, 843].forEach(x => {
    clear(x, 633, 20, 13);
    frame(x, 633, 20, 13);
    box(YELLOW, x + 1, 634, 11, 11);
    for (let j = 635; j < 645; j += 3) box(YELLOW, x + 15, j, 4, 1);
});
bga(903, 629, 16, 13, { solid: true, bare: true, mix: 0 });
bga(928, 632, 10, 9, { bare: true, teal: .5 });
frame(936, 509, 19, 13);
[942, 946, 951].forEach(x => { box(YELLOW, x, 510, 1, 2); box(YELLOW, x, 519, 1, 2); });

pads(931, 574, 37, 23);
pads(943, 602, 12, 25, GREY);
pads(959, 602, 12, 25, GREY);
pads(970, 548, 12, 28);
pads(949, 551, 5, 19);
pads(959, 551, 5, 19);
[947, 953, 959, 965].forEach(x => pads(x, 539, 5, 12));
pads(975, 533, 5, 13, GREY);

// rows of parts around the power chip
bank(1001, 535, 4, 4, 6, 5);
bank(1035, 535, 3, 2, 6, 5);
bank(1034, 572, 1, 13, 7, 5);
bank(1053, 560, 1, 16, 8, 5);
bank(1064, 558, 2, 16, 8, 5);
bank(978, 631, 2, 4, 9, 4);
bank(1022, 632, 5, 3, 6, 5);
pads(1001, 558, 10, 11);
pads(1012, 555, 8, 13);
pads(1021, 556, 10, 12);
pads(1033, 559, 8, 11);
pads(1021, 543, 8, 12);
[560, 571, 584, 597, 615].forEach(y => pads(1042, y, 10, 11));
pads(982, 620, 9, 9);
pads(999, 620, 11, 11);
pads(1011, 620, 11, 9);
pads(1024, 619, 8, 11);
pads(999, 631, 11, 12);
pads(1011, 629, 10, 8);
bga(990, 572, 43, 43, { solid: true, mix: .1, teal: .03 });
pads(1060, 540, 25, 13, GREY);
bga(1097, 534, 17, 18, { size: 1 });
bga(1137, 533, 18, 15, { teal: .35, solid: true });
bga(1082, 557, 71, 73, { solid: true, mix: .05, teal: .02, bare: true });
// routing ring of the processor
[[1090,562,48,3],[1090,613,48,2],[1090,562,3,53],[1136,562,2,53],[1097,591,11,9],[1108,572,6,4],[1098,580,5,5],[1100,603,5,5],[1132,571,4,5],[1132,603,4,5]].forEach(r => box(GREEN, ...r));
flush();
pads(1124, 635, 8, 9);

// memory with wide ball pitch
clear(1169, 540, 67, 52);
frame(1169, 540, 67, 52);
for (let row = 0; row < 12; row++) {
    for (let i = 1173 + (row % 2) * 4; i < 1234; i += 8) {
        plus(row > 10 || i < 1176 || i > 1230 || rnd() < .12 ? GREY : YELLOW, i, 545 + row * 4, 1);
    }
}
flush();
bga(1190, 600, 38, 45, { teal: .15, mix: .04 });
bga(1220, 511, 14, 15, {});
bga(1258, 539, 14, 17, { mix: .2, size: 1 });
pads(1249, 540, 8, 11);
pads(1273, 540, 8, 11);
pads(1240, 570, 11, 10);
pads(1252, 570, 10, 12);
pads(1262, 571, 9, 11);
pads(1271, 571, 9, 11);
pads(1240, 592, 7, 15);
bga(1251, 586, 21, 21, { size: 1 });
pads(1246, 609, 11, 10);
bga(1296, 538, 47, 37, { main: GREY, alt: GREY });
bga(1359, 540, 21, 28, { main: GREY, alt: YELLOW, solid: true, bare: true });
bga(1386, 538, 23, 34, { main: GREY, alt: YELLOW, mix: .1, solid: true });
clear(1396, 544, 9, 10);
clear(1390, 556, 12, 12);
bga(1300, 587, 29, 31, { teal: .12, mix: .1 });
bga(1373, 586, 14, 13, { size: 1 });
[[1346,584,18,13],[1345,606,19,18],[1242,649,16,14],[1263,651,15,10]].forEach(([x, y, w, h]) => {
    clear(x, y, w, h);
    frame(x, y, w, h);
    for (let i = x + 2; i < x + w - 2; i += 2) {
        box(YELLOW, i, y + 1, 1, 1);
        box(YELLOW, i, y + h - 2, 1, 1);
    }
});
flush();
connector(1428, 509, 39, 13);
connector(1472, 543, 13, 25);
connector(1472, 607, 13, 33);
connector(1429, 658, 50, 13);
greyCap(1438, 531);
greyCap(1439, 635);
[1294, 1314].forEach(x => {
    frame(x, 657, 12, 13);
    box(GREY, x + 1, 659, 3, 9);
    box(GREY, x + 8, 659, 3, 9);
});
points(YELLOW, 1, "1294,633 1299,635 1292,638 1290,641 1259,639 1260,642 1227,651 1232,651 1176,622 1179,625 1180,619 1179,635");
flush();
circle(GREY, 1455, 588, 8);
circle(TEAL, 1477, 588, 4);

[[704, 267], [1154, 267], [704, 667], [1154, 667]].forEach(([x, y]) => {
    svg += `<text class="watermark" transform="translate(${x + 5} ${y + 5}) rotate(-45)">XZZ@XZZHK</text>`;
});

document.getElementById("board").innerHTML = svg;
```
